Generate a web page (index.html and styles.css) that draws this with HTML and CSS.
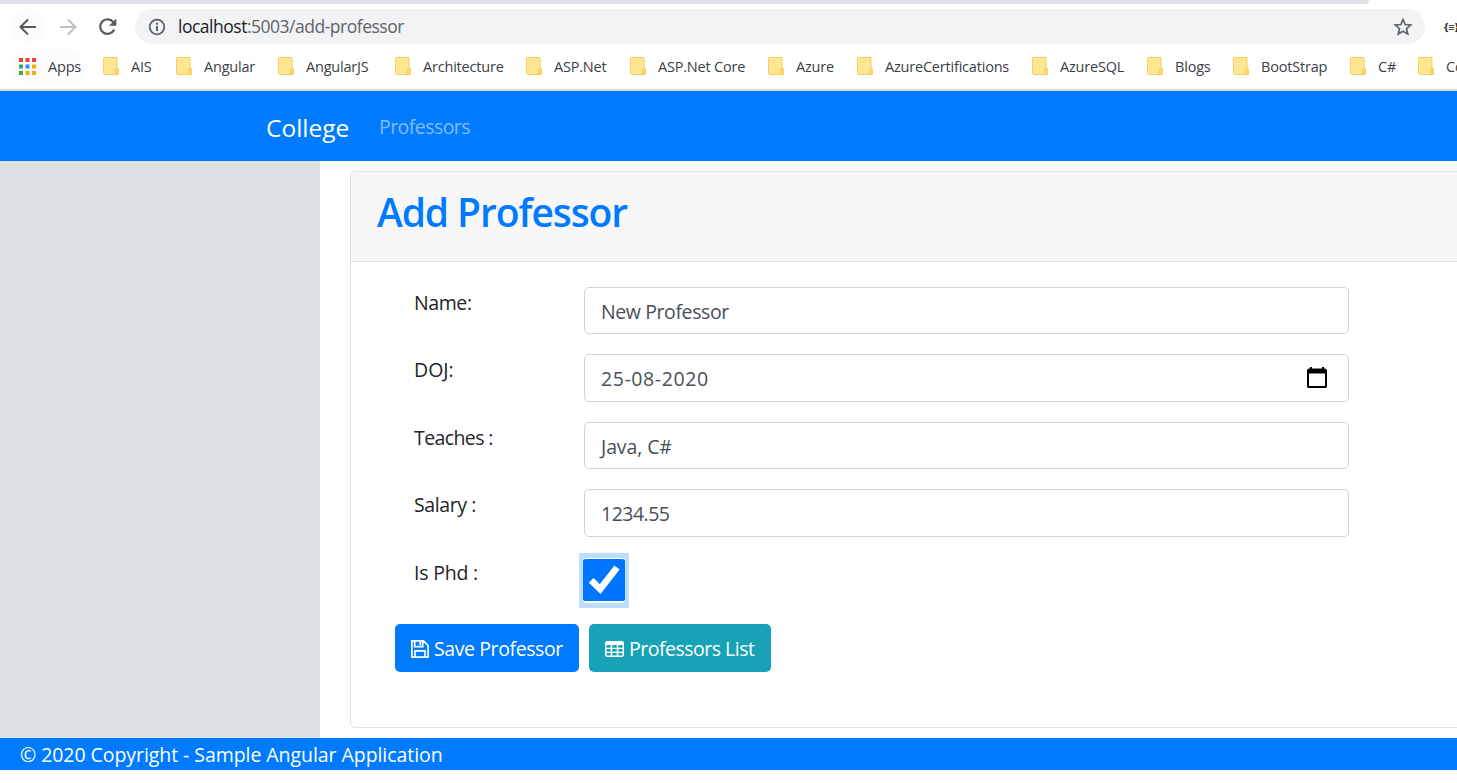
FILE: index.html
```
<!DOCTYPE html>
<html lang="en">
<head>
<meta charset="utf-8">
<title>Add Professor</title>
<link rel="stylesheet" href="styles.css">
</head>
<body>
<svg class="defs" width="0" height="0">
  <symbol id="folder" viewBox="0 0 16 18">
    <path d="M1 .5h13v11.2h1.2v5.8H1.5L.5 16.5V1z" fill="#ffe694" stroke="#f6cf57"/>
    <path d="M12.5 17v-4.5q0-1 1.3-1t1.3 1V17z" fill="#ffe07d" stroke="#f3c633" stroke-width=".8"/>
  </symbol>
</svg>
<div class="tabstrip"></div>
<div class="toolbar">
  <span class="nav-btn nav-back"><svg width="18" height="18" viewBox="0 0 18 18" fill="none" stroke="#55595e" stroke-width="2"><path d="M17 9H2M9 1.500L1.500 9L9 16.500"/></svg></span>
  <span class="nav-btn nav-forward"><svg width="18" height="18" viewBox="0 0 18 18" fill="none" stroke="#bdbfc1" stroke-width="2"><path d="M1 9H16M9 1.500L16.500 9L9 16.500"/></svg></span>
  <span class="nav-btn"><svg width="20" height="20" viewBox="0 0 20 20"><path d="M16.200 12.500A7.300 7.300 0 1 1 15.200 5" fill="none" stroke="#55595e" stroke-width="2.200"/><path d="M18.300 1.500V8.800H11z" fill="#55595e"/></svg></span>
  <div class="address">
    <svg width="18" height="18" viewBox="0 0 18 18"><circle cx="9" cy="9" r="7.300" fill="none" stroke="#5f6368" stroke-width="1.800"/><path d="M8 8h2v5H8zM8 4.800h2v2H8z" fill="#5f6368"/></svg>
    <span class="url"><span class="host">localhost</span>:5003/add-professor</span>
    <svg class="star" width="20" height="20" viewBox="0 0 20 20"><path d="M10 2.500L12.200 7.500L17.700 8L13.500 11.700L14.800 17L10 14.200L5.200 17L6.500 11.700L2.300 8L7.800 7.500Z" fill="none" stroke="#5f6368" stroke-width="1.700"/></svg>
  </div>
  <span class="extension">{≡}</span>
</div>
<div class="bookmarks">
  <span class="bookmark apps"><svg width="17" height="17" viewBox="0 0 17 17"><path d="M0 0h4v4H0zM6.500 0h4v4h-4zM13 0h4v4h-4z" fill="#ea4335"/><path d="M0 6.500h4v4H0zM0 13h4v4H0z" fill="#34a853"/><path d="M6.500 6.500h4v4h-4z" fill="#2d8cff"/><path d="M13 6.500h4v4h-4zM6.500 13h4v4h-4zM13 13h4v4h-4z" fill="#fbaa05"/></svg><span>Apps</span></span>
  <span class="bookmark"><svg width="16" height="18"><use href="#folder"/></svg><span>AIS</span></span>
  <span class="bookmark"><svg width="16" height="18"><use href="#folder"/></svg><span>Angular</span></span>
  <span class="bookmark"><svg width="16" height="18"><use href="#folder"/></svg><span>AngularJS</span></span>
  <span class="bookmark"><svg width="16" height="18"><use href="#folder"/></svg><span>Architecture</span></span>
  <span class="bookmark"><svg width="16" height="18"><use href="#folder"/></svg><span>ASP.Net</span></span>
  <span class="bookmark"><svg width="16" height="18"><use href="#folder"/></svg><span>ASP.Net Core</span></span>
  <span class="bookmark"><svg width="16" height="18"><use href="#folder"/></svg><span>Azure</span></span>
  <span class="bookmark"><svg width="16" height="18"><use href="#folder"/></svg><span>AzureCertifications</span></span>
  <span class="bookmark"><svg width="16" height="18"><use href="#folder"/></svg><span>AzureSQL</span></span>
  <span class="bookmark"><svg width="16" height="18"><use href="#folder"/></svg><span>Blogs</span></span>
  <span class="bookmark"><svg width="16" height="18"><use href="#folder"/></svg><span>BootStrap</span></span>
  <span class="bookmark"><svg width="16" height="18"><use href="#folder"/></svg><span>C#</span></span>
  <span class="bookmark"><svg width="16" height="18"><use href="#folder"/></svg><span>Co</span></span>
</div>
<nav class="navbar"><a class="brand">College</a><a class="nav-link">Professors</a></nav>
<div class="layout">
  <aside class="sidebar"></aside>
  <main class="content">
    <section class="card">
      <header class="card-header"><h1 class="title">Add Professor</h1></header>
      <form class="form">
        <div class="row"><label class="label">Name:</label><div class="control"><span class="v-name">New Professor</span></div></div>
        <div class="row"><label class="label l-doj">DOJ:</label><div class="control tall"><span class="v-date">25-08-2020</span><svg width="20" height="22" viewBox="0 0 20 22"><path d="M3 0h2v1.500h10V0h2v1.500h1.500L20 3v17l-1 1H1l-1-1V3l1.500-1.500H3zM2 6.500V19h16V6.500z" fill="#000" fill-rule="evenodd"/></svg></div></div>
        <div class="row"><label class="label l-teaches">Teaches :</label><div class="control"><span class="v-teaches">Java, C#</span></div></div>
        <div class="row"><label class="label l-salary">Salary :</label><div class="control tall"><span class="v-salary">1234.55</span></div></div>
        <div class="row check-row"><label class="label l-phd">Is Phd :</label><span class="focus"><span class="check"><svg width="42" height="42" viewBox="0 0 42 42"><path d="M8.200 21.300L17.200 30L34 8.500" fill="none" stroke="#fff" stroke-width="6.600"/></svg></span></span></div>
        <div class="actions">
          <button type="button" class="btn btn-primary"><svg width="18" height="18" viewBox="0 0 18 18" fill="none" stroke="#fff" stroke-width="1.700"><path d="M.9.900H12.500L17.100 5.500V17.100H.9zM3.700 1v5.700h8V1M4 17v-6.200h10V17"/><path d="M9.300 2v3" stroke-width="2"/></svg><span class="save-text">Save Professor</span></button>
          <button type="button" class="btn btn-info"><svg width="19" height="16" viewBox="0 0 19 16"><path d="M1.500 0h16L19 1.500v13L17.500 16h-16L0 14.500v-13zM1.500 4v2.700h4.200V4zm5.700 0v2.700h4.600V4zm6.100 0v2.700h4.200V4zM1.500 8v2.700h4.200V8zm5.700 0v2.700h4.600V8zm6.100 0v2.700h4.200V8zM1.500 12v2.500h4.200V12zm5.700 0v2.500h4.600V12zm6.100 0v2.500h4.200V12z" fill="#fff" fill-rule="evenodd"/></svg><span class="list-text">Professors List</span></button>
        </div>
      </form>
    </section>
  </main>
</div>
<footer class="footer"><span>© 2020 Copyright - Sample Angular Application</span></footer>
</body>
</html>
```
FILE: styles.css
```
* { box-sizing: border-box; }
body {
  margin: 0;
  width: 1457px;
  height: 783px;
  overflow: hidden;
  background: #fff;
  color: #212529;
  font-family: "Open Sans", "Noto Sans", sans-serif;
  font-size: 19.5px;
  line-height: 30px;
}
svg { display: block; flex: none; }
.defs { position: absolute; }
.tabstrip { width: 1369px; height: 4px; background: #dee1e6; border-bottom-right-radius: 6px; }
.toolbar { display: flex; height: 45px; padding: 5px 0 5px 11px; gap: 6px; overflow: hidden; }
.nav-btn { display: flex; flex: none; align-items: center; justify-content: center; width: 34px; height: 35px; border-radius: 17px; }
.nav-back { background: #fcfcfc; }
.address {
  display: flex;
  flex: none;
  align-items: center;
  width: 1290px;
  height: 35px;
  margin-left: 4px;
  padding: 0 12px 0 13px;
  background: #f1f3f4;
  border-radius: 18px;
}
.url { margin: -2px 0 0 12px; color: #5f6368; font-size: 17.5px; letter-spacing: -0.49px; white-space: nowrap; }
.host { color: #202124; }
.star { margin-left: auto; }
.extension { margin-left: 13px; color: #202124; font-size: 11px; font-weight: 700; line-height: 35px; }
.bookmarks {
  display: grid;
  grid-template-columns: 93px 73px 102px 117px 131px 104px 138px 89px 175px 115px 86px 117px 68px 39px;
  height: 40px;
  padding-left: 10px;
  overflow: hidden;
  color: #3c4043;
  font-size: 14.5px;
  letter-spacing: -0.2px;
}
.bookmark { display: flex; align-items: center; gap: 12px; height: 34px; white-space: nowrap; overflow: hidden; }
.bookmark span { padding-top: 2px; }
.apps { width: 78px; padding-left: 9px; border-radius: 17px; background: #fcfcfc; }
.navbar { display: flex; height: 72px; padding: 20px 0 0 266px; background: #007bff; border-top: 2px solid #dadce0; color: #fff; }
.brand { width: 113px; font-size: 24.5px; line-height: 34px; }
.nav-link { color: rgba(255,255,255,.5); line-height: 32px; letter-spacing: -0.55px; }
.layout { display: flex; height: 577px; }
.sidebar { width: 320px; flex: none; background: #dee2e6; }
.content { width: 1137px; padding: 10px 0 10px 30px; overflow: hidden; }
.card { width: 1180px; height: 557px; border: 1px solid #dfdfdf; border-radius: 5px; overflow: hidden; }
.card-header { height: 90px; padding: 12px 26px; background: #f7f7f7; border-bottom: 1px solid #dfdfdf; }
.title { margin: 0; color: #007bff; font-size: 39px; font-weight: 600; line-height: 56px; letter-spacing: -1.1px; }
.form { padding: 25px 0 0 44px; }
.row { display: flex; gap: 20px; margin-bottom: 20px; padding-left: 19px; }
.label { width: 150px; line-height: 32px; letter-spacing: -0.4px; }
.l-doj { letter-spacing: 0; }
.l-teaches { letter-spacing: -0.6px; }
.l-phd { letter-spacing: -0.2px; }
.control { display: flex; align-items: center; justify-content: space-between; width: 765px; height: 47px; padding: 2px 21px 0 16px; border: 1px solid #ced4da; border-radius: 5px; color: #495057; }
.tall { height: 48px; }
.control svg { margin-top: -2px; }
.v-name { letter-spacing: -0.4px; }
.v-date { letter-spacing: .6px; }
.v-teaches { letter-spacing: -0.1px; }
.v-salary { letter-spacing: -0.5px; }
.check-row { height: 51px; margin-bottom: 16px; }
.focus { display: flex; align-items: center; justify-content: center; width: 50px; height: 55px; margin: -4px 0 0 -5px; background: #bfdeff; }
.check { display: block; width: 42px; height: 45px; border: solid #fff; border-width: 1px 0 2px; border-radius: 3px; background: #0075ff; }
.actions { display: flex; gap: 10px; }
.btn { display: flex; align-items: center; height: 48px; padding: 2px 16px 0; gap: 5px; border: 0; border-radius: 5px; color: #fff; font: inherit; white-space: nowrap; }
.btn-primary { width: 184px; background: #007bff; letter-spacing: -0.4px; }
.btn-info { width: 182px; background: #17a2b8; letter-spacing: -0.5px; }
.footer { height: 32px; padding-left: 20px; background: #007bff; color: #fff; line-height: 34px; letter-spacing: -0.06px; }
```
